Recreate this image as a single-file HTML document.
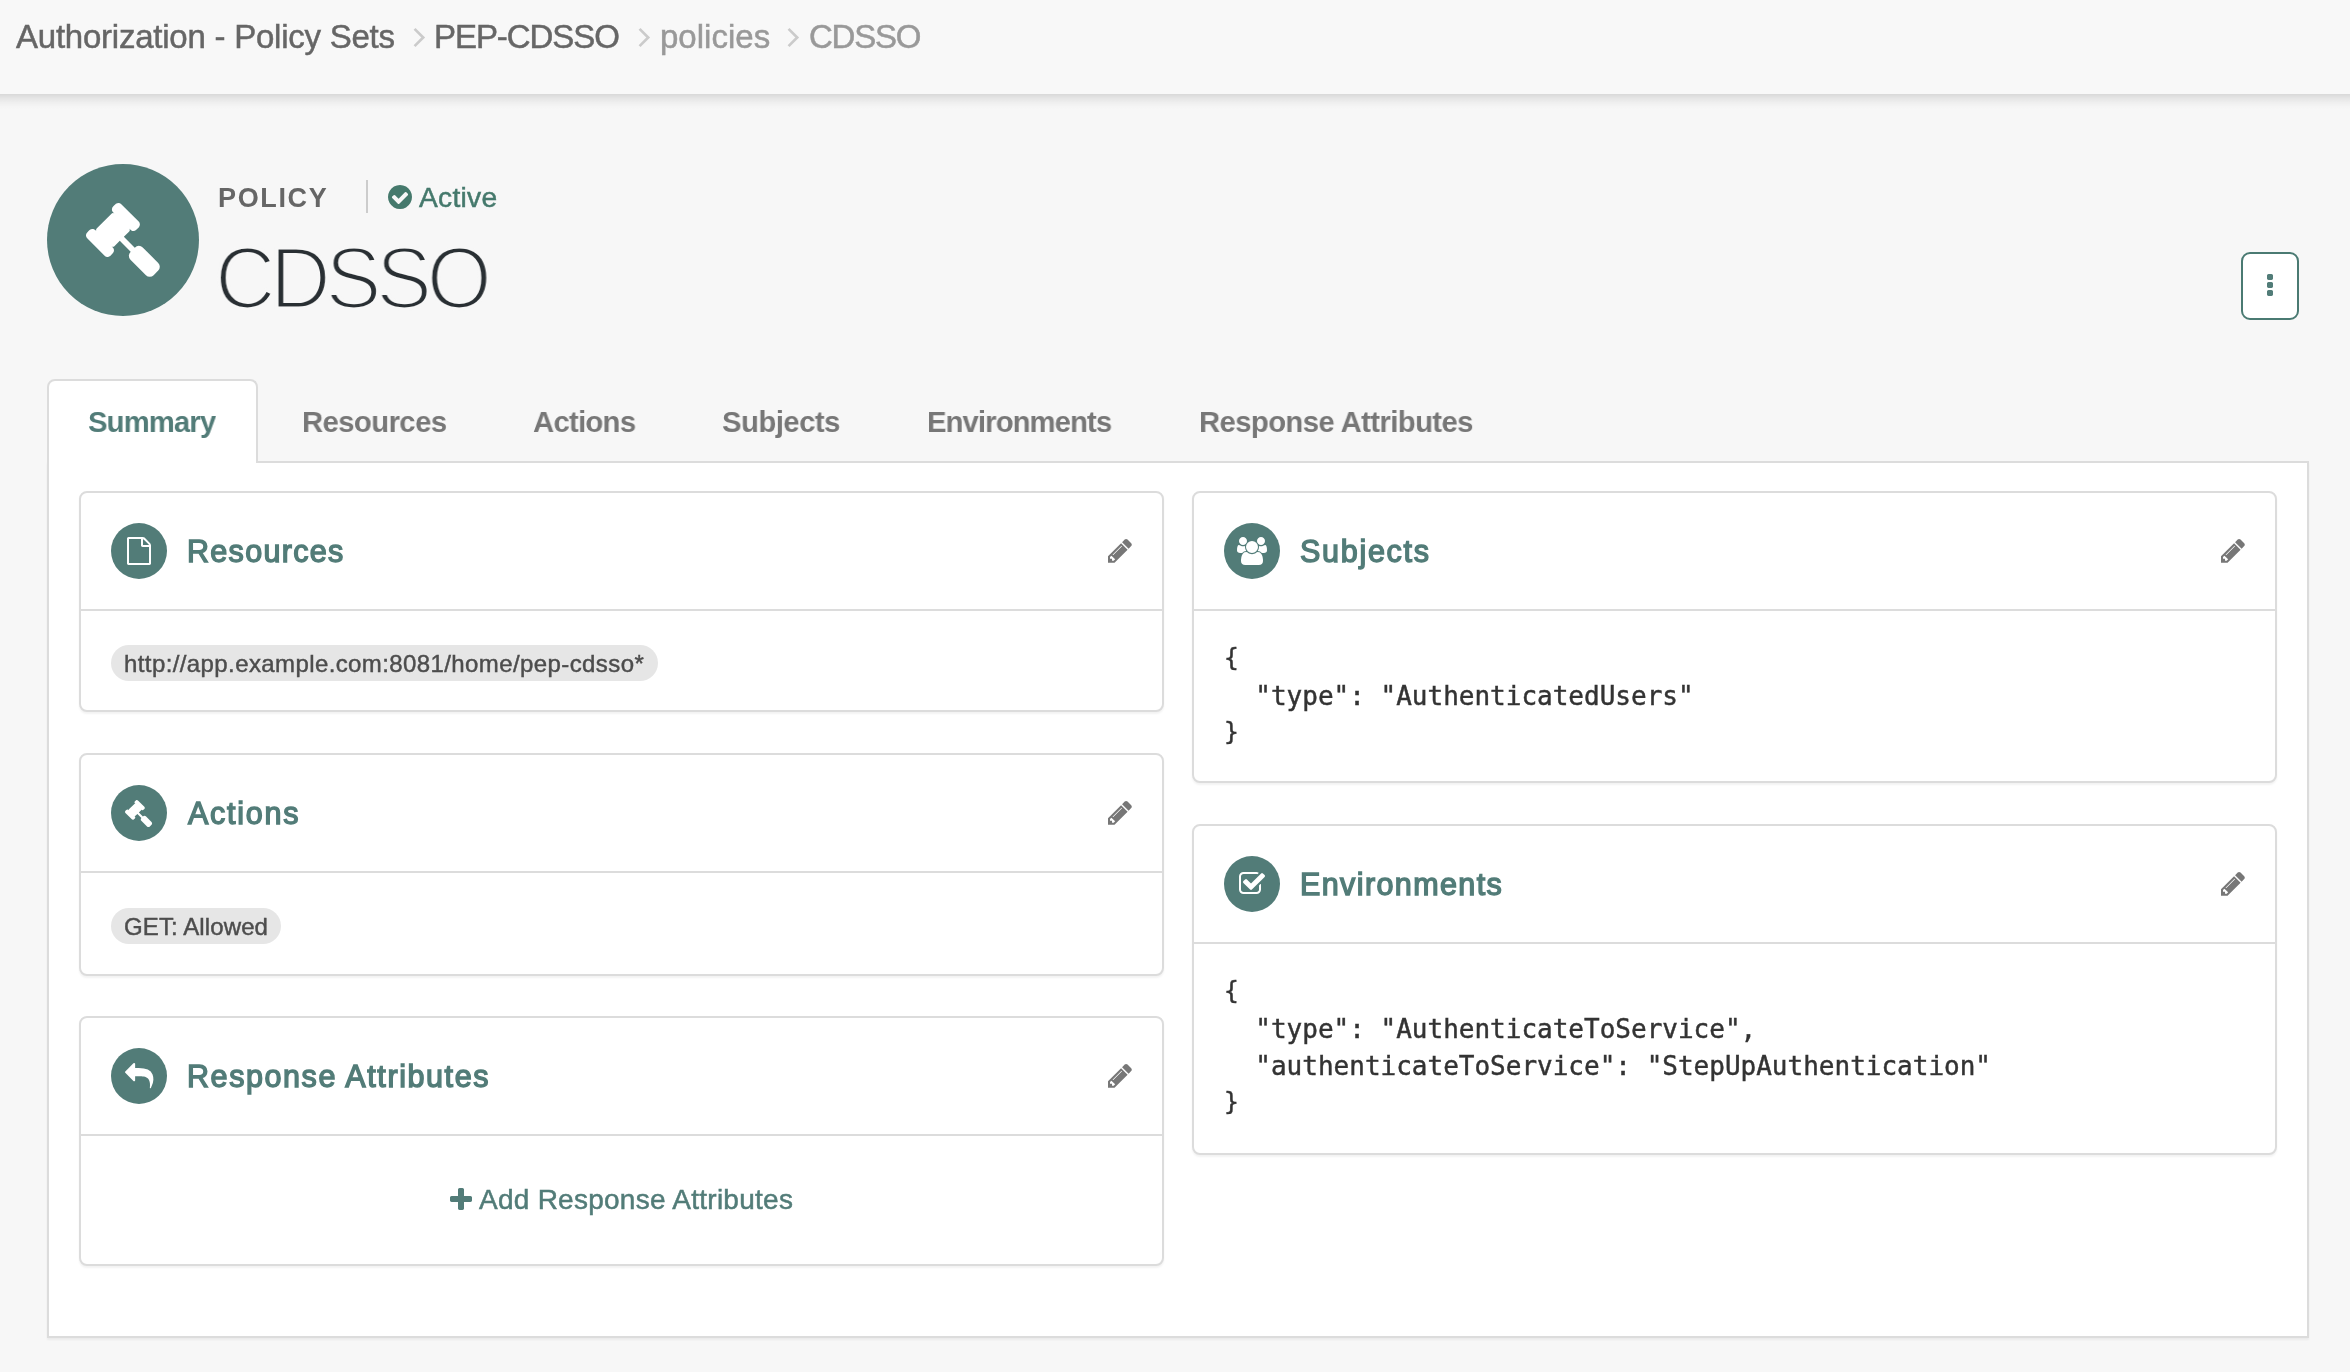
<!DOCTYPE html>
<html lang="en"><head><meta charset="utf-8"><title>CDSSO - Policy</title>
<style>
html,body{margin:0;padding:0}
body{width:2350px;height:1372px;overflow:hidden;position:relative;background:#f7f7f7;font-family:"Liberation Sans",sans-serif;color:#333}
.t{position:absolute;white-space:pre;line-height:1em;margin:0;padding:0;will-change:transform}
.ic{position:absolute;display:block;overflow:visible}
.abs{position:absolute;box-sizing:border-box}
.nav{left:0;top:0;width:2350px;height:94px;background:#f8f8f8}
.navsh{left:0;top:94px;width:2350px;height:16px;background:linear-gradient(to bottom,rgba(0,0,0,.125) 0,rgba(0,0,0,.075) 25%,rgba(0,0,0,.03) 55%,rgba(0,0,0,.008) 80%,rgba(0,0,0,0) 100%)}
.bc{color:#666;-webkit-text-stroke:.5px #666}.bc2{color:#999;-webkit-text-stroke:.5px #999}
.circle{border-radius:50%;background:#527c78}
.tabpanel{left:47px;top:461px;width:2262px;height:877px;background:#fff;border:2px solid #dcdcdc;box-shadow:0 2px 2px rgba(0,0,0,.05)}
.tabact{left:47px;top:379px;width:211px;height:84px;background:#fff;border:2px solid #dcdcdc;border-bottom:0;border-radius:8px 8px 0 0}
.tab{font-weight:bold;color:#777}
.tab.on{color:#527c78}
.card{background:#fff;border:2px solid #dcdcdc;border-radius:8px;box-shadow:0 2px 2px rgba(0,0,0,.05)}
.hr{height:2px;background:#dcdcdc}
.ttl{color:#527c78;-webkit-text-stroke:1.4px #527c78}
.chip{background:#e6e6e6;border-radius:18px;height:36px;color:#4d4d4d}
.mono{font-family:"DejaVu Sans Mono","Liberation Mono",monospace;color:#333;-webkit-text-stroke:.45px #333}
.btn{left:2241px;top:252px;width:58px;height:68px;background:#fff;border:2px solid #4a7a72;border-radius:9px}
</style></head><body>

<nav aria-label="breadcrumb"><div class="abs nav"></div><div class="abs navsh"></div>
<div class="t bc" style="left:16px;top:20px;font-size:33px;letter-spacing:-0.237px">Authorization - Policy Sets</div>
<svg class="ic" style="left:410.0px;top:24px;width:20px;height:28px" viewBox="0 0 20 28"><polyline points="4.55,4.9 13.2,13.5 4.55,22.1" fill="none" stroke="#cbcbcb" stroke-width="2.7" stroke-linejoin="miter" stroke-linecap="butt"/></svg>
<div class="t bc" style="left:434px;top:20px;font-size:33px;letter-spacing:-1.061px">PEP-CDSSO</div>
<svg class="ic" style="left:634.6px;top:24px;width:20px;height:28px" viewBox="0 0 20 28"><polyline points="4.55,4.9 13.2,13.5 4.55,22.1" fill="none" stroke="#cbcbcb" stroke-width="2.7" stroke-linejoin="miter" stroke-linecap="butt"/></svg>
<div class="t bc2" style="left:660px;top:20px;font-size:33px;letter-spacing:0.012px">policies</div>
<svg class="ic" style="left:783.5px;top:24px;width:20px;height:28px" viewBox="0 0 20 28"><polyline points="4.55,4.9 13.2,13.5 4.55,22.1" fill="none" stroke="#cbcbcb" stroke-width="2.7" stroke-linejoin="miter" stroke-linecap="butt"/></svg>
<div class="t bc2" style="left:809px;top:20px;font-size:33px;letter-spacing:-1.225px">CDSSO</div>
</nav><header>
<div class="abs circle" style="left:47px;top:164px;width:152px;height:152px"></div>
<svg class="ic" style="left:86.20px;top:203.35px;width:73.80px;height:73.80px" viewBox="40 -1496 1731 1731" preserveAspectRatio="none"><path fill="#fff" transform="scale(1,-1)" d="M1771 0q0 -53 -37 -90l-107 -108q-39 -37 -91 -37q-53 0 -90 37l-363 364q-38 36 -38 90q0 53 43 96l-256 256l-126 -126q-14 -14 -34 -14t-34 14q2 -2 12.5 -12t12.5 -13t10 -11.5t10 -13.5t6 -13.5t5.5 -16.5t1.5 -18q0 -38 -28 -68q-3 -3 -16.5 -18t-19 -20.5t-18.5 -16.5t-22 -15.5t-22 -9t-26 -4.5q-40 0 -68 28l-408 408q-28 28 -28 68q0 13 4.5 26t9 22t15.5 22t16.5 18.5t20.5 19t18 16.5q30 28 68 28q10 0 18 -1.5t16.5 -5.5t13.5 -6t13.5 -10t11.5 -10t13 -12.5t12 -12.5q-14 14 -14 34t14 34l348 348q14 14 34 14t34 -14q-2 2 -12.5 12t-12.5 13t-10 11.5t-10 13.5t-6 13.5t-5.5 16.5t-1.5 18q0 38 28 68q3 3 16.5 18t19 20.5t18.5 16.5t22 15.5t22 9t26 4.5q40 0 68 -28l408 -408q28 -28 28 -68q0 -13 -4.5 -26t-9 -22t-15.5 -22t-16.5 -18.5t-20.5 -19t-18 -16.5q-30 -28 -68 -28q-10 0 -18 1.5t-16.5 5.5t-13.5 6t-13.5 10t-11.5 10t-13 12.5t-12 12.5q14 -14 14 -34t-14 -34l-126 -126l256 -256q43 43 96 43q52 0 91 -37l363 -363q37 -39 37 -91z"/></svg>
<div class="t" style="left:218px;top:185px;font-size:27px;font-weight:bold;color:#666;letter-spacing:1.649px">POLICY</div>
<div class="abs" style="left:366px;top:180px;width:2px;height:33px;background:#ccc"></div>
<svg class="ic" style="left:387.90px;top:184.80px;width:24.00px;height:24.00px" viewBox="0 -1408 1536 1536" preserveAspectRatio="none"><path fill="#45796c" transform="scale(1,-1)" d="M1284 802q0 28 -18 46l-91 90q-19 19 -45 19t-45 -19l-408 -407l-226 226q-19 19 -45 19t-45 -19l-91 -90q-18 -18 -18 -46q0 -27 18 -45l362 -362q19 -19 45 -19q27 0 46 19l543 543q18 18 18 45zM1536 640q0 -209 -103 -385.5t-279.5 -279.5t-385.5 -103t-385.5 103t-279.5 279.5t-103 385.5t103 385.5t279.5 279.5t385.5 103t385.5 -103t279.5 -279.5t103 -385.5z"/></svg>
<div class="t" style="left:419px;top:183px;font-size:28.2px;color:#45796c;-webkit-text-stroke:.5px #45796c;letter-spacing:0.273px">Active</div>
<div class="t" style="left:215px;top:234px;font-size:87px;color:#292f33;-webkit-text-stroke:3.2px #f7f7f7;letter-spacing:-5.510px;transform-origin:0 0;transform:scaleX(0.963)">CDSSO</div>
<div class="abs btn"></div>
<svg class="ic" style="left:2267.00px;top:274.00px;width:6.00px;height:22.00px" viewBox="0 -1408 384 1408" preserveAspectRatio="none"><path fill="#527c78" transform="scale(1,-1)" d="M384 288v-192q0 -40 -28 -68t-68 -28h-192q-40 0 -68 28t-28 68v192q0 40 28 68t68 28h192q40 0 68 -28t28 -68zM384 800v-192q0 -40 -28 -68t-68 -28h-192q-40 0 -68 28t-28 68v192q0 40 28 68t68 28h192q40 0 68 -28t28 -68zM384 1312v-192q0 -40 -28 -68t-68 -28h-192q-40 0 -68 28t-28 68v192q0 40 28 68t68 28h192q40 0 68 -28t28 -68z"/></svg>
</header><main>
<div class="abs tabpanel"></div><div class="abs tabact"></div>
<div class="t tab on" style="left:88px;top:407px;font-size:30.3px;letter-spacing:-0.890px;transform-origin:0 0;transform:scaleX(0.965)">Summary</div>
<div class="t tab " style="left:302px;top:407px;font-size:30.3px;letter-spacing:-0.586px;transform-origin:0 0;transform:scaleX(0.965)">Resources</div>
<div class="t tab " style="left:533px;top:407px;font-size:30.3px;letter-spacing:-0.728px;transform-origin:0 0;transform:scaleX(0.965)">Actions</div>
<div class="t tab " style="left:722px;top:407px;font-size:30.3px;letter-spacing:-0.520px;transform-origin:0 0;transform:scaleX(0.965)">Subjects</div>
<div class="t tab " style="left:927px;top:407px;font-size:30.3px;letter-spacing:-0.923px;transform-origin:0 0;transform:scaleX(0.965)">Environments</div>
<div class="t tab " style="left:1199px;top:407px;font-size:30.3px;letter-spacing:-0.596px;transform-origin:0 0;transform:scaleX(0.965)">Response Attributes</div>
<section><div class="abs card" style="left:79px;top:491px;width:1085px;height:221px"></div>
<div class="abs hr" style="left:81px;top:609px;width:1081px"></div>
<div class="abs circle" style="left:111px;top:523px;width:56px;height:56px"></div>
<svg class="ic" style="left:127.00px;top:536.80px;width:24.00px;height:28.00px" viewBox="0 -1536 1536 1792" preserveAspectRatio="none"><path fill="#fff" transform="scale(1,-1)" d="M1468 1156q28 -28 48 -76t20 -88v-1152q0 -40 -28 -68t-68 -28h-1344q-40 0 -68 28t-28 68v1600q0 40 28 68t68 28h896q40 0 88 -20t76 -48zM1024 1400v-376h376q-10 29 -22 41l-313 313q-12 12 -41 22zM1408 -128v1024h-416q-40 0 -68 28t-28 68v416h-768v-1536h1280z"/></svg>
<div class="t ttl" style="left:187px;top:536px;font-size:30.5px;letter-spacing:1.307px">Resources</div>
<svg class="ic" style="left:1108.10px;top:539.10px;width:23.80px;height:23.80px" viewBox="0 -1387 1515 1515" preserveAspectRatio="none"><path fill="#777" transform="scale(1,-1)" d="M363 0l91 91l-235 235l-91 -91v-107h128v-128h107zM886 928q0 22 -22 22q-10 0 -17 -7l-542 -542q-7 -7 -7 -17q0 -22 22 -22q10 0 17 7l542 542q7 7 7 17zM832 1120l416 -416l-832 -832h-416v416zM1515 1024q0 -53 -37 -90l-166 -166l-416 416l166 165q36 38 90 38q53 0 91 -38l235 -234q37 -39 37 -91z"/></svg>
</section>
<div class="abs chip" style="left:111px;top:645px;width:547px"></div>
<div class="t" style="left:124px;top:652px;font-size:24px;color:#4d4d4d;-webkit-text-stroke:.45px #4d4d4d;letter-spacing:0.399px">http://app.example.com:8081/home/pep-cdsso*</div>
<section><div class="abs card" style="left:79px;top:753px;width:1085px;height:223px"></div>
<div class="abs hr" style="left:81px;top:871px;width:1081px"></div>
<div class="abs circle" style="left:111px;top:785px;width:56px;height:56px"></div>
<svg class="ic" style="left:125.45px;top:799.50px;width:27.10px;height:27.10px" viewBox="40 -1496 1731 1731" preserveAspectRatio="none"><path fill="#fff" transform="scale(1,-1)" d="M1771 0q0 -53 -37 -90l-107 -108q-39 -37 -91 -37q-53 0 -90 37l-363 364q-38 36 -38 90q0 53 43 96l-256 256l-126 -126q-14 -14 -34 -14t-34 14q2 -2 12.5 -12t12.5 -13t10 -11.5t10 -13.5t6 -13.5t5.5 -16.5t1.5 -18q0 -38 -28 -68q-3 -3 -16.5 -18t-19 -20.5t-18.5 -16.5t-22 -15.5t-22 -9t-26 -4.5q-40 0 -68 28l-408 408q-28 28 -28 68q0 13 4.5 26t9 22t15.5 22t16.5 18.5t20.5 19t18 16.5q30 28 68 28q10 0 18 -1.5t16.5 -5.5t13.5 -6t13.5 -10t11.5 -10t13 -12.5t12 -12.5q-14 14 -14 34t14 34l348 348q14 14 34 14t34 -14q-2 2 -12.5 12t-12.5 13t-10 11.5t-10 13.5t-6 13.5t-5.5 16.5t-1.5 18q0 38 28 68q3 3 16.5 18t19 20.5t18.5 16.5t22 15.5t22 9t26 4.5q40 0 68 -28l408 -408q28 -28 28 -68q0 -13 -4.5 -26t-9 -22t-15.5 -22t-16.5 -18.5t-20.5 -19t-18 -16.5q-30 -28 -68 -28q-10 0 -18 1.5t-16.5 5.5t-13.5 6t-13.5 10t-11.5 10t-13 12.5t-12 12.5q14 -14 14 -34t-14 -34l-126 -126l256 -256q43 43 96 43q52 0 91 -37l363 -363q37 -39 37 -91z"/></svg>
<div class="t ttl" style="left:188px;top:798px;font-size:30.5px;letter-spacing:1.735px">Actions</div>
<svg class="ic" style="left:1108.10px;top:801.10px;width:23.80px;height:23.80px" viewBox="0 -1387 1515 1515" preserveAspectRatio="none"><path fill="#777" transform="scale(1,-1)" d="M363 0l91 91l-235 235l-91 -91v-107h128v-128h107zM886 928q0 22 -22 22q-10 0 -17 -7l-542 -542q-7 -7 -7 -17q0 -22 22 -22q10 0 17 7l542 542q7 7 7 17zM832 1120l416 -416l-832 -832h-416v416zM1515 1024q0 -53 -37 -90l-166 -166l-416 416l166 165q36 38 90 38q53 0 91 -38l235 -234q37 -39 37 -91z"/></svg>
</section>
<div class="abs chip" style="left:111px;top:908px;width:170px"></div>
<div class="t" style="left:124px;top:915px;font-size:24px;color:#4d4d4d;-webkit-text-stroke:.45px #4d4d4d;letter-spacing:0.109px">GET: Allowed</div>
<section><div class="abs card" style="left:79px;top:1016px;width:1085px;height:250px"></div>
<div class="abs hr" style="left:81px;top:1134px;width:1081px"></div>
<div class="abs circle" style="left:111px;top:1048px;width:56px;height:56px"></div>
<svg class="ic" style="left:124.80px;top:1062.75px;width:28.40px;height:25.30px" viewBox="0 -1696 1792 1600" preserveAspectRatio="none"><path fill="#fff" transform="scale(1,-1)" d="M1792 640q0 -166 -127 -451q-3 -7 -10.5 -24t-13.5 -30t-13 -22q-12 -17 -28 -17q-15 0 -23.5 10t-8.5 25q0 9 2.5 26.5t2.5 23.5q5 68 5 123q0 101 -17.5 181t-48.5 138.5t-80 101t-105.5 69.5t-133 42.5t-154 21.5t-175.5 6h-224v-256q0 -26 -19 -45t-45 -19t-45 19l-512 512q-19 19 -19 45t19 45l512 512q19 19 45 19t45 -19t19 -45v-256h224q713 0 875 -403q53 -134 53 -333z"/></svg>
<div class="t ttl" style="left:187px;top:1061px;font-size:30.5px;letter-spacing:1.581px">Response Attributes</div>
<svg class="ic" style="left:1108.10px;top:1064.10px;width:23.80px;height:23.80px" viewBox="0 -1387 1515 1515" preserveAspectRatio="none"><path fill="#777" transform="scale(1,-1)" d="M363 0l91 91l-235 235l-91 -91v-107h128v-128h107zM886 928q0 22 -22 22q-10 0 -17 -7l-542 -542q-7 -7 -7 -17q0 -22 22 -22q10 0 17 7l542 542q7 7 7 17zM832 1120l416 -416l-832 -832h-416v416zM1515 1024q0 -53 -37 -90l-166 -166l-416 416l166 165q36 38 90 38q53 0 91 -38l235 -234q37 -39 37 -91z"/></svg>
</section>
<svg class="ic" style="left:449.50px;top:1188.05px;width:22.00px;height:22.00px" viewBox="0 -1408 1408 1408" preserveAspectRatio="none"><path fill="#527c78" transform="scale(1,-1)" d="M1408 800v-192q0 -40 -28 -68t-68 -28h-416v-416q0 -40 -28 -68t-68 -28h-192q-40 0 -68 28t-28 68v416h-416q-40 0 -68 28t-28 68v192q0 40 28 68t68 28h416v416q0 40 28 68t68 28h192q40 0 68 -28t28 -68v-416h416q40 0 68 -28t28 -68z"/></svg>
<div class="t" style="left:479px;top:1186px;font-size:28px;color:#527c78;-webkit-text-stroke:.5px #527c78;letter-spacing:0.259px">Add Response Attributes</div>
<section><div class="abs card" style="left:1192px;top:491px;width:1085px;height:292px"></div>
<div class="abs hr" style="left:1194px;top:609px;width:1081px"></div>
<div class="abs circle" style="left:1224px;top:523px;width:56px;height:56px"></div>
<svg class="ic" style="left:1237.00px;top:536.80px;width:30.00px;height:28.00px" viewBox="0 -1536 1920 1792" preserveAspectRatio="none"><path fill="#fff" transform="scale(1,-1)" d="M593 640q-162 -5 -265 -128h-134q-82 0 -138 40.5t-56 118.5q0 353 124 353q6 0 43.5 -21t97.5 -42.5t119 -21.5q67 0 133 23q-5 -37 -5 -66q0 -139 81 -256zM1664 3q0 -120 -73 -189.5t-194 -69.5h-874q-121 0 -194 69.5t-73 189.5q0 53 3.5 103.5t14 109t26.5 108.5t43 97.5t62 81t85.5 53.5t111.5 20q10 0 43 -21.5t73 -48t107 -48t135 -21.5t135 21.5t107 48t73 48t43 21.5q61 0 111.5 -20t85.5 -53.5t62 -81t43 -97.5t26.5 -108.5t14 -109t3.5 -103.5zM640 1280q0 -106 -75 -181t-181 -75t-181 75t-75 181t75 181t181 75t181 -75t75 -181zM1344 896q0 -159 -112.5 -271.5t-271.5 -112.5t-271.5 112.5t-112.5 271.5t112.5 271.5t271.5 112.5t271.5 -112.5t112.5 -271.5zM1920 671q0 -78 -56 -118.5t-138 -40.5h-134q-103 123 -265 128q81 117 81 256q0 29 -5 66q66 -23 133 -23q59 0 119 21.5t97.5 42.5t43.5 21q124 0 124 -353zM1792 1280q0 -106 -75 -181t-181 -75t-181 75t-75 181t75 181t181 75t181 -75t75 -181z"/></svg>
<div class="t ttl" style="left:1300px;top:536px;font-size:30.5px;letter-spacing:1.717px">Subjects</div>
<svg class="ic" style="left:2221.10px;top:539.10px;width:23.80px;height:23.80px" viewBox="0 -1387 1515 1515" preserveAspectRatio="none"><path fill="#777" transform="scale(1,-1)" d="M363 0l91 91l-235 235l-91 -91v-107h128v-128h107zM886 928q0 22 -22 22q-10 0 -17 -7l-542 -542q-7 -7 -7 -17q0 -22 22 -22q10 0 17 7l542 542q7 7 7 17zM832 1120l416 -416l-832 -832h-416v416zM1515 1024q0 -53 -37 -90l-166 -166l-416 416l166 165q36 38 90 38q53 0 91 -38l235 -234q37 -39 37 -91z"/></svg>
</section>
<div class="t mono" style="left:1224px;top:646px;font-size:24.6px">{</div>
<div class="t mono" style="left:1224px;top:683px;font-size:26px">  &quot;type&quot;: &quot;AuthenticatedUsers&quot;</div>
<div class="t mono" style="left:1224px;top:720px;font-size:24.6px">}</div>
<section><div class="abs card" style="left:1192px;top:824px;width:1085px;height:331px"></div>
<div class="abs hr" style="left:1194px;top:942px;width:1081px"></div>
<div class="abs circle" style="left:1224px;top:856px;width:56px;height:56px"></div>
<svg class="ic" style="left:1239.00px;top:871.90px;width:26.00px;height:22.00px" viewBox="0 -1408 1663 1408" preserveAspectRatio="none"><path fill="#fff" transform="scale(1,-1)" d="M1408 606v-318q0 -119 -84.5 -203.5t-203.5 -84.5h-832q-119 0 -203.5 84.5t-84.5 203.5v832q0 119 84.5 203.5t203.5 84.5h832q63 0 117 -25q15 -7 18 -23q3 -17 -9 -29l-49 -49q-10 -10 -23 -10q-3 0 -9 2q-23 6 -45 6h-832q-66 0 -113 -47t-47 -113v-832q0 -66 47 -113t113 -47h832q66 0 113 47t47 113v254q0 13 9 22l64 64q10 10 23 10q6 0 12 -3q20 -8 20 -29zM1639 1095l-814 -814q-24 -24 -57 -24t-57 24l-430 430q-24 24 -24 57t24 57l110 110q24 24 57 24t57 -24l263 -263l647 647q24 24 57 24t57 -24l110 -110q24 -24 24 -57t-24 -57z"/></svg>
<div class="t ttl" style="left:1300px;top:869px;font-size:30.5px;letter-spacing:1.397px">Environments</div>
<svg class="ic" style="left:2221.10px;top:872.10px;width:23.80px;height:23.80px" viewBox="0 -1387 1515 1515" preserveAspectRatio="none"><path fill="#777" transform="scale(1,-1)" d="M363 0l91 91l-235 235l-91 -91v-107h128v-128h107zM886 928q0 22 -22 22q-10 0 -17 -7l-542 -542q-7 -7 -7 -17q0 -22 22 -22q10 0 17 7l542 542q7 7 7 17zM832 1120l416 -416l-832 -832h-416v416zM1515 1024q0 -53 -37 -90l-166 -166l-416 416l166 165q36 38 90 38q53 0 91 -38l235 -234q37 -39 37 -91z"/></svg>
</section>
<div class="t mono" style="left:1224px;top:979px;font-size:24.6px">{</div>
<div class="t mono" style="left:1224px;top:1016px;font-size:26px">  &quot;type&quot;: &quot;AuthenticateToService&quot;,</div>
<div class="t mono" style="left:1224px;top:1053px;font-size:26px">  &quot;authenticateToService&quot;: &quot;StepUpAuthentication&quot;</div>
<div class="t mono" style="left:1224px;top:1090px;font-size:24.6px">}</div>
</main></body></html>
